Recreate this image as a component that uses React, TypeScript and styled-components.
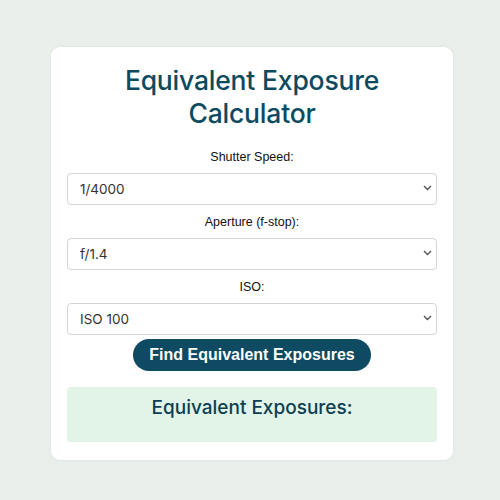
import React, { useState } from "react";
import styled, { createGlobalStyle } from "styled-components";

const GlobalStyle = createGlobalStyle`
  body {
    margin: 0;
    background: #eaefeb;
    font-family: "Liberation Sans", Arial, sans-serif;
  }
`;

const Page = styled.div`
  padding: 47px 0 0 51px;
  min-height: 500px;
  box-sizing: border-box;
`;

const Card = styled.div`
  width: 402px;
  box-sizing: border-box;
  background: #fff;
  border-radius: 9px;
  box-shadow: 0 0 4px rgba(0, 0, 0, 0.06);
  padding: 17px 16px 18px;
  display: flex;
  flex-direction: column;
`;

const Title = styled.h1`
  margin: 0 0 19px;
  font-family: Inter, "Noto Sans", sans-serif;
  font-weight: 500;
  font-size: 26.5px;
  line-height: 33px;
  letter-spacing: -0.2px;
  color: #0c4a5e;
  text-align: center;
`;

const Label = styled.label<{ $gap?: number }>`
  display: block;
  text-align: center;
  font-size: 12.5px;
  line-height: 16px;
  color: #111;
  margin: ${(p) => p.$gap ?? 9}px 0 8px;
`;

const SelectWrap = styled.div`
  position: relative;
`;

const Select = styled.select`
  width: 100%;
  height: 32px;
  box-sizing: border-box;
  appearance: none;
  border: 1px solid #d2d6d4;
  border-radius: 4px;
  background: #fff;
  padding: 0 12px;
  font-family: Inter, "Noto Sans", sans-serif;
  font-size: 13.5px;
  color: #333;
`;

const Chevron = styled.svg`
  position: absolute;
  right: 5px;
  top: 12px;
  pointer-events: none;
`;

const Button = styled.button`
  align-self: center;
  margin-top: 4px;
  width: 238px;
  height: 32px;
  border: none;
  border-radius: 16px;
  background: #0e4a62;
  color: #fff;
  font-family: "Liberation Sans", Arial, sans-serif;
  font-weight: 700;
  font-size: 16px;
  cursor: pointer;
`;

const Result = styled.div`
  margin-top: 16px;
  height: 55px;
  box-sizing: border-box;
  background: #e2f3e8;
  border-radius: 4px;
  padding-top: 9px;
`;

const ResultTitle = styled.h2`
  margin: 0;
  text-align: center;
  font-family: Inter, "Noto Sans", sans-serif;
  font-weight: 500;
  font-size: 19px;
  line-height: 24px;
  color: #0c3f52;
`;

function Field({
  label,
  options,
  gap,
}: {
  label: string;
  options: string[];
  gap?: number;
}) {
  const [v, setV] = useState(options[0]);
  return (
    <>
      <Label $gap={gap}>{label}</Label>
      <SelectWrap>
        <Select value={v} onChange={(e) => setV(e.target.value)}>
          {options.map((o) => (
            <option key={o}>{o}</option>
          ))}
        </Select>
        <Chevron width="9" height="6" viewBox="0 0 9 6">
          <path d="M1 1l3.5 3.5L8 1" fill="none" stroke="#555" strokeWidth="1.4" />
        </Chevron>
      </SelectWrap>
    </>
  );
}

export default function App() {
  return (
    <Page>
      <GlobalStyle />
      <Card>
        <Title>
          Equivalent Exposure
          <br />
          Calculator
        </Title>
        <Field label="Shutter Speed:" gap={0} options={["1/4000", "1/2000", "1/1000", "1/500"]} />
        <Field label="Aperture (f-stop):" options={["f/1.4", "f/2", "f/2.8", "f/4"]} />
        <Field label="ISO:" options={["ISO 100", "ISO 200", "ISO 400", "ISO 800"]} />
        <Button>Find Equivalent Exposures</Button>
        <Result>
          <ResultTitle>Equivalent Exposures:</ResultTitle>
        </Result>
      </Card>
    </Page>
  );
}
